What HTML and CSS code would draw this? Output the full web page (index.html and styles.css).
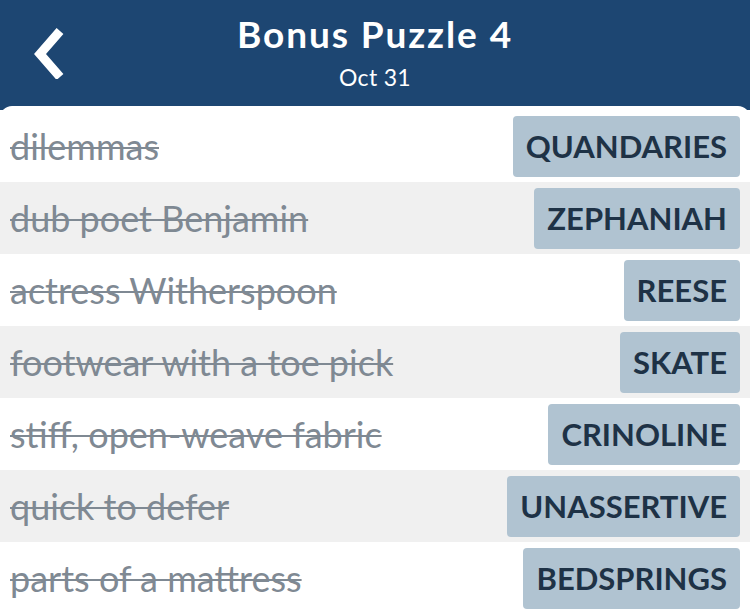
FILE: index.html
```html
<!DOCTYPE html>
<html>
<head>
<meta charset="utf-8">
<link rel="stylesheet" href="styles.css">
</head>
<body>
<div class="app">
  <header class="header">
    <button class="back" aria-label="Back">
      <svg width="40" height="60" viewBox="0 0 40 60">
        <polyline points="27,12 7,35 27,58" fill="none" stroke="#fff" stroke-width="9" stroke-linejoin="miter"/>
      </svg>
    </button>
    <div class="titles">
      <h1 class="title">Bonus Puzzle 4</h1>
      <div class="subtitle">Oct 31</div>
    </div>
  </header>
  <main class="panel">
    <div class="row"><span class="clue">dilemmas</span><span class="chip">QUANDARIES</span></div>
    <div class="row alt"><span class="clue">dub poet Benjamin</span><span class="chip">ZEPHANIAH</span></div>
    <div class="row"><span class="clue">actress Witherspoon</span><span class="chip">REESE</span></div>
    <div class="row alt"><span class="clue">footwear with a toe pick</span><span class="chip">SKATE</span></div>
    <div class="row"><span class="clue">stiff, open-weave fabric</span><span class="chip">CRINOLINE</span></div>
    <div class="row alt"><span class="clue">quick to defer</span><span class="chip">UNASSERTIVE</span></div>
    <div class="row"><span class="clue">parts of a mattress</span><span class="chip">BEDSPRINGS</span></div>
  </main>
</div>
</body>
</html>
```
FILE: styles.css
```css
* { box-sizing: border-box; }
html, body {
  margin: 0;
  padding: 0;
  background: #1d4672;
  font-family: "Lato", "Open Sans", sans-serif;
}
.app {
  width: 750px;
  height: 612px;
  overflow: hidden;
  background: #1d4672;
  display: flex;
  flex-direction: column;
}
.header {
  height: 106px;
  flex: none;
  display: grid;
  grid-template-columns: 100px 1fr 100px;
  align-items: start;
}
.back {
  background: none;
  border: 0;
  padding: 0 0 0 33px;
  margin-top: 19px;
  display: flex;
  align-items: center;
  cursor: pointer;
}
.titles {
  text-align: center;
  color: #fff;
  padding-top: 12px;
}
.title {
  margin: 0;
  font-size: 37px;
  font-weight: 700;
  line-height: 44px;
  letter-spacing: 1.9px;
}
.subtitle {
  margin-top: 7px;
  font-size: 23px;
  line-height: 28px;
  letter-spacing: 0.3px;
}
.panel {
  flex: 1;
  background: #fff;
  border-radius: 12px 12px 0 0;
  padding-top: 4px;
}
.row {
  height: 72px;
  display: flex;
  align-items: center;
  justify-content: space-between;
  padding: 0 10px 0 10px;
  background: #fff;
}
.row.alt { background: #f0f0f0; }
.clue {
  font-size: 36px;
  line-height: 40px;
  color: #7f8993;
  text-decoration: line-through;
  text-decoration-thickness: 2px;
}
.chip {
  height: 61px;
  display: flex;
  align-items: center;
  padding: 0 13px;
  background: #b0c3d1;
  border-radius: 4px;
  color: #1e3246;
  font-size: 31px;
  font-weight: 700;
}
```
